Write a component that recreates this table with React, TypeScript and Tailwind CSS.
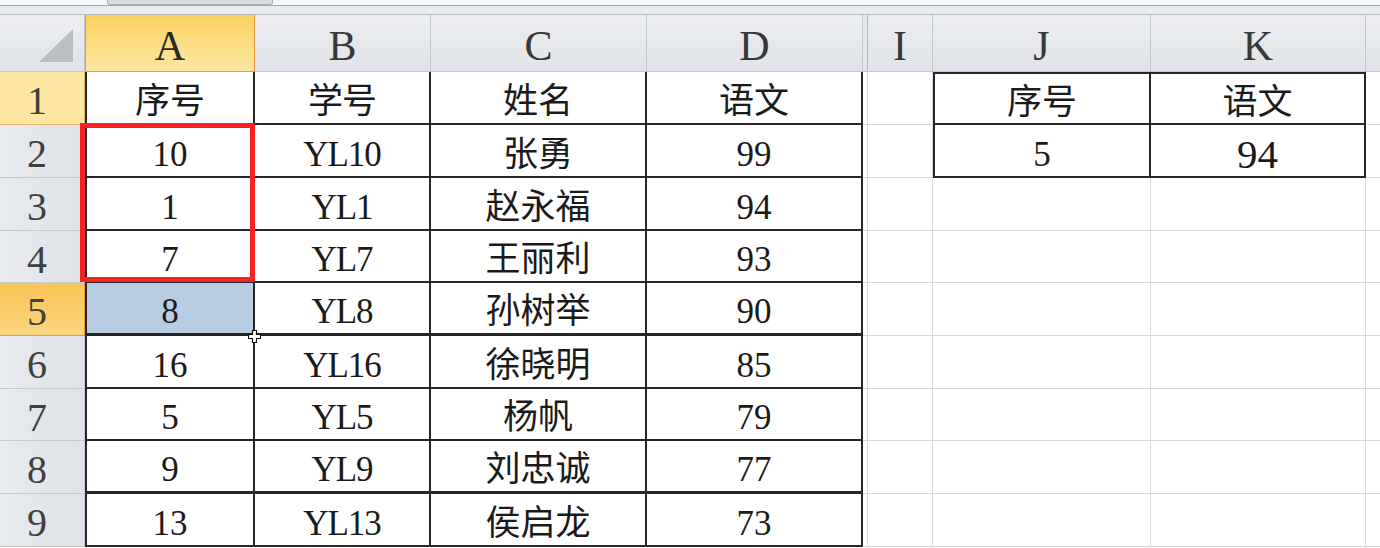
import React from "react";

const serif = { fontFamily: '"Liberation Serif", "Noto Sans CJK SC", serif' };

type Row = { n: string; a: string; b: string; c: string; d: string; j?: string; k?: string };

const rows: Row[] = [
  { n: "1", a: "序号", b: "学号", c: "姓名", d: "语文", j: "序号", k: "语文" },
  { n: "2", a: "10", b: "YL10", c: "张勇", d: "99", j: "5", k: "94" },
  { n: "3", a: "1", b: "YL1", c: "赵永福", d: "94" },
  { n: "4", a: "7", b: "YL7", c: "王丽利", d: "93" },
  { n: "5", a: "8", b: "YL8", c: "孙树举", d: "90" },
  { n: "6", a: "16", b: "YL16", c: "徐晓明", d: "85" },
  { n: "7", a: "5", b: "YL5", c: "杨帆", d: "79" },
  { n: "8", a: "9", b: "YL9", c: "刘忠诚", d: "77" },
  { n: "9", a: "13", b: "YL13", c: "侯启龙", d: "73" },
];

const heights = ["h-[53px]", "h-[53px]", "h-[53px]", "h-[52px]", "h-[53px]", "h-[53px]", "h-[52px]", "h-[53px]", "h-[53px]"];

const dark = "border-[#262626]";
const light = "border-[#d6d9dd]";
const cellBase = "flex items-center justify-center pt-[7px] leading-none text-[#1a1a1a]";
const cellText = `${cellBase} text-[35px]`;

function ColHeader({ label, w, active }: { label: string; w: string; active?: boolean }) {
  return (
    <div
      className={`${w} h-full flex items-center justify-center pt-[6px] text-[42px] leading-none border-r border-b ${
        active
          ? "bg-gradient-to-b from-[#fcd25c] to-[#fde7a3] border-[#e39a3d] border-l border-l-[#e39a3d] text-[#2a2a2a]"
          : "bg-gradient-to-b from-[#eceef1] to-[#e1e4e8] border-[#c3c7cc] text-[#383838]"
      }`}
      style={serif}
    >
      {label}
    </div>
  );
}

export default function App() {
  return (
    <div className="relative w-[1380px] h-[548px] overflow-hidden bg-white flex flex-col" style={serif}>
      {/* top strip */}
      <div className="h-[5px] flex bg-[#f7f8f9]">
        <div className="w-[107px]" />
        <div className="w-[166px] h-[5px] bg-[#dcdddf] border-x border-b border-[#a9abae] rounded-b-[3px]" />
        <div className="flex-1" />
      </div>
      <div className="h-[10px] bg-[#eaedf0] border-t border-b border-[#a3a7ac] border-b-[#b7bbc0]" />

      {/* column headers */}
      <div className="h-[57px] flex">
        <div className="w-[85px] h-full bg-gradient-to-b from-[#eceef1] to-[#e1e4e8] border-r border-b border-[#c3c7cc] flex items-end justify-end pr-[11px] pb-[9px]">
          <svg width="34" height="33" viewBox="0 0 34 33">
            <polygon points="34,0 34,33 0,33" fill="#b9bec4" />
          </svg>
        </div>
        <ColHeader label="A" w="w-[170px]" active />
        <ColHeader label="B" w="w-[176px]" />
        <ColHeader label="C" w="w-[216px]" />
        <ColHeader label="D" w="w-[216px]" />
        <div className="w-[5px] h-full bg-[#e4e7eb] border-r border-b border-[#b8bcc1]" />
        <ColHeader label="I" w="w-[65px]" />
        <ColHeader label="J" w="w-[218px]" />
        <ColHeader label="K" w="w-[215px]" />
        <div className="flex-1 h-full bg-gradient-to-b from-[#eceef1] to-[#e1e4e8] border-b border-[#c3c7cc]" />
      </div>

      {/* body rows */}
      {rows.map((r, i) => {
        const thick = r.n === "5" || r.n === "8" ? "border-b-[3px]" : "border-b-2";
        const hdrBg =
          r.n === "5"
            ? "bg-gradient-to-b from-[#f8c552] to-[#fbd67e] border-[#e39a3d]"
            : r.n === "1"
            ? "bg-[#fce6a1] border-[#e8b45e]"
            : "bg-gradient-to-r from-[#e7eaee] to-[#dfe3e8] border-[#c6cad0]";
        const selected = r.n === "5";
        return (
          <div key={r.n} className={`${heights[i]} flex shrink-0`}>
            <div
              className={`w-[85px] h-full border-r border-b ${hdrBg} flex items-center justify-center pr-[10px] pt-[6px] text-[40px] leading-none text-[#3f3f3f]`}
            >
              {r.n}
            </div>
            <div
              className={`w-[170px] h-full border-l-2 border-r-2 ${thick} ${dark} ${cellText} ${
                selected ? "bg-[#b8cce4]" : "bg-white"
              }`}
            >
              {r.a}
            </div>
            <div className={`w-[176px] h-full border-r-2 ${thick} ${dark} ${cellText} tracking-[-1px]`}>{r.b}</div>
            <div className={`w-[216px] h-full border-r-2 ${thick} ${dark} ${cellText}`}>{r.c}</div>
            <div className={`w-[216px] h-full border-r-2 ${thick} ${dark} ${cellText}`}>{r.d}</div>
            <div className={`w-[5px] h-full border-r border-b ${light}`} />
            <div className={`w-[65px] h-full border-r border-b ${light}`} />
            {r.j !== undefined ? (
              <>
                <div
                  className={`w-[218px] h-full border-l-2 border-r-2 border-b-2 ${dark} ${
                    r.n === "1" ? "border-t-2" : ""
                  } ${cellText}`}
                >
                  {r.j}
                </div>
                <div
                  className={`w-[215px] h-full border-r-2 border-b-2 ${dark} ${r.n === "1" ? "border-t-2" : ""} ${
                    r.n === "2" ? `${cellBase} text-[41px]` : cellText
                  }`}
                >
                  {r.k}
                </div>
              </>
            ) : (
              <>
                <div className={`w-[218px] h-full border-r border-b ${light}`} />
                <div className={`w-[215px] h-full border-r border-b ${light}`} />
              </>
            )}
            <div className={`flex-1 h-full border-b ${light}`} />
          </div>
        );
      })}

      {/* red selection rectangle over A2:A4 */}
      <div className="absolute left-[80px] top-[123px] w-[175px] h-[159px] border-[5px] border-[#f52222] pointer-events-none" />

      {/* fill handle cross */}
      <svg className="absolute left-[248px] top-[330px]" width="13" height="13" viewBox="0 0 13 13">
        <path d="M4.5 0.5h4v4h4v4h-4v4h-4v-4h-4v-4h4z" fill="#ffffff" stroke="#111111" strokeWidth="1.2" />
      </svg>
    </div>
  );
}
